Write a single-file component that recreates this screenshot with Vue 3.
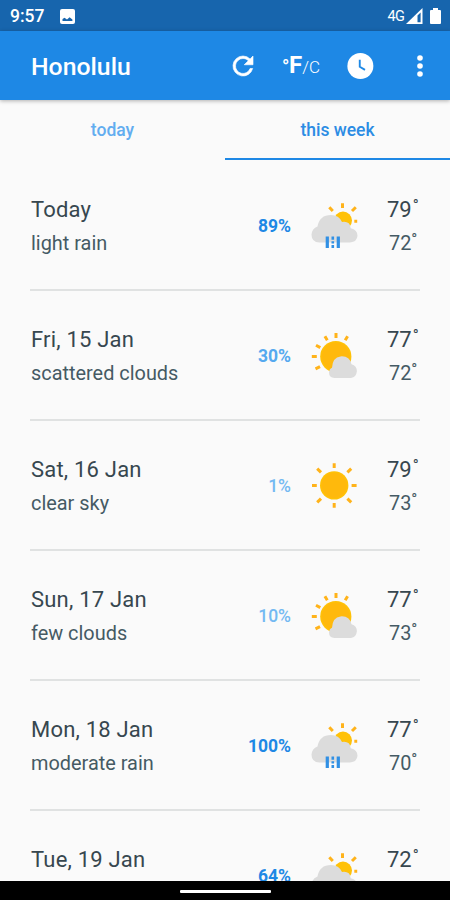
<template>
  <div class="screen">
    <header class="status-bar">
      <span class="time">9:57</span>
      <svg class="picture" width="15" height="15" viewBox="0 0 15 15">
        <rect width="15" height="15" rx="2" fill="#fff" />
        <path d="M2.5 12 V10 L4.5 8.8 L7 10.5 L9.6 8.3 L12.4 10.5 V12 Z" fill="#1765ad" />
      </svg>
      <span class="network">4G</span>
      <svg class="signal" width="17" height="16" viewBox="0 0 17 16">
        <path d="M0 16 L16.5 0 V16 Z" fill="#fff" />
        <path d="M11.5 7.5 L14.6 4.4 V14.2 H11.5 Z" fill="#1765ad" />
      </svg>
      <svg class="battery" width="11" height="16" viewBox="0 0 11 16">
        <path d="M3 0 H8 V2 H10 Q11 2 11 3 V15 Q11 16 10 16 H1 Q0 16 0 15 V3 Q0 2 1 2 H3 Z" fill="#fff" />
      </svg>
    </header>

    <div class="toolbar">
      <h1>Honolulu</h1>
      <svg class="refresh" width="30" height="30" viewBox="0 0 24 24">
        <path d="M17.65 6.35A7.96 7.96 0 0 0 12 4a8 8 0 1 0 7.73 10h-2.08A6 6 0 1 1 12 6c1.66 0 3.14.69 4.22 1.78L13 11h7V4z" fill="#fff" stroke="#fff" stroke-width=".5" />
      </svg>
      <div class="units"><span class="deg">°</span><b>F</b><span class="alt">/C</span></div>
      <svg class="clock" width="30" height="30" viewBox="0 0 24 24">
        <circle cx="12.3" cy="12" r="10.4" fill="#fff" />
        <path d="M11.8 7 V12.6 L16 15.1" fill="none" stroke="#1e88e5" stroke-width="1.5" />
      </svg>
      <svg class="more" width="6" height="22" viewBox="0 0 6 22">
        <circle v-for="y in [3, 11, 19]" :key="y" cx="3" :cy="y" r="2.8" fill="#fff" />
      </svg>
    </div>

    <nav class="tabs">
      <div class="tab">today</div>
      <div class="tab active">this week</div>
    </nav>

    <main class="list">
      <div v-for="day in days" :key="day.date" class="row">
        <div class="info">
          <div class="date">{{ day.date }}</div>
          <div class="desc">{{ day.desc }}</div>
        </div>
        <div class="chance" :class="day.level">{{ day.chance }}%</div>

        <svg v-if="day.icon === 'rain'" class="icon" width="50" height="50" viewBox="0 0 50 50">
          <circle cx="33" cy="20.5" r="9" fill="#ffc107" />
          <path class="ray" d="M32.5 3.2V8 M19.3 7.3L22.8 11 M45.8 7.3L42 11 M44.3 21.3H47.2" />
          <path d="M9.5 42.5 Q1.5 42 1.5 34.7 Q2 28.5 7.5 26.5 Q9.5 15 21 15 Q29 15.2 32 22 Q40 20.8 40.8 28.3 Q47.5 30 47.5 35.8 Q47 42 40 42.5 Z" fill="#dcdcdc" />
          <path class="drops" d="M17.3 36.5V48 M28.3 36.5V48" />
          <path class="drops thin" d="M22.8 36.5V39.8 M22.8 41.3V43.5 M22.8 45V48" />
        </svg>

        <svg v-else-if="day.icon === 'cloudy'" class="icon" width="50" height="50" viewBox="0 0 50 50">
          <circle cx="25.8" cy="26.6" r="15.6" fill="#ffc107" />
          <circle cx="25.8" cy="26.6" r="14" fill="#ffb90c" />
          <path class="ray" d="M26 3V8 M14.9 6.3L17.3 10.3 M37.6 6.3L35.2 10.3 M6 15.2L10.3 17.6 M1.8 26.6H6.8 M5.5 38.8L10 36.6" />
          <path d="M24.5 48 Q19 47.5 19 42.8 Q19.2 38.6 22 37.7 Q22.6 27.2 30.5 26.4 Q39.5 25.6 41.5 34.3 Q46.9 36 46.9 41.3 Q46.2 47.5 41 48 Z" fill="#dcdcdc" />
        </svg>

        <svg v-else class="icon" width="50" height="50" viewBox="0 0 50 50">
          <circle cx="24.2" cy="25.4" r="14.2" fill="#ffc107" />
          <circle cx="24.2" cy="25.4" r="12.6" fill="#ffb90c" />
          <path class="ray" d="M24.2 3.2V8 M24.2 43V47.8 M2 25.4H6.8 M41.6 25.4H46.6 M7.2 8.6L11 12.4 M41.2 8.6L37.4 12.4 M7.2 42.4L11 38.6 M41.2 42.4L37.4 38.6" />
        </svg>

        <div class="temps">
          <div class="high">{{ day.high }}<span>°</span></div>
          <div class="low"><template v-if="day.low">{{ day.low }}<span>°</span></template></div>
        </div>
      </div>
    </main>

    <footer class="nav-bar"><div class="handle"></div></footer>
  </div>
</template>

<script setup>
import { ref } from 'vue';

const days = ref([
  { date: 'Today', desc: 'light rain', chance: 89, level: 'strong', icon: 'rain', high: 79, low: 72 },
  { date: 'Fri, 15 Jan', desc: 'scattered clouds', chance: 30, level: 'medium', icon: 'cloudy', high: 77, low: 72 },
  { date: 'Sat, 16 Jan', desc: 'clear sky', chance: 1, level: 'weak', icon: 'clear', high: 79, low: 73 },
  { date: 'Sun, 17 Jan', desc: 'few clouds', chance: 10, level: 'weak', icon: 'cloudy', high: 77, low: 73 },
  { date: 'Mon, 18 Jan', desc: 'moderate rain', chance: 100, level: 'strong', icon: 'rain', high: 77, low: 70 },
  { date: 'Tue, 19 Jan', desc: '', chance: 64, level: 'strong', icon: 'rain', high: 72, low: null },
]);
</script>

<style>
body {
  margin: 0;
  background-color: #fafafa;
}
</style>

<style scoped>
.screen {
  display: flex;
  flex-direction: column;
  width: 450px;
  height: 900px;
  overflow: hidden;
  background-color: #fafafa;
  font-family: Roboto, "Liberation Sans", sans-serif;
}

.status-bar {
  display: flex;
  align-items: center;
  flex: none;
  height: 31px;
  box-sizing: border-box;
  padding: 1px 9px 0 10px;
  background-color: #1765ad;
  color: #fff;
}

.time {
  width: 50px;
  font-size: 17.5px;
  font-weight: 500;
}

.network {
  margin-left: auto;
  font-size: 14.5px;
  letter-spacing: -0.8px;
}

.signal {
  margin-left: 2px;
  margin-right: 7px;
}

.toolbar {
  display: flex;
  align-items: center;
  flex: none;
  height: 69px;
  box-sizing: border-box;
  padding: 0 27px 0 31px;
  background-color: #1e88e5;
  color: #fff;
  box-shadow: 0 1px 4px rgba(0, 0, 0, 0.3);
}

h1 {
  margin: 1px 0 0;
  width: 197px;
  font-size: 24.8px;
  font-weight: 500;
}

.units {
  display: flex;
  align-items: baseline;
  width: 62px;
  margin-left: 25px;
  line-height: 30px;
}

.units b {
  font-size: 24px;
}

.deg {
  font-size: 19px;
  font-weight: 700;
  width: 6px;
  margin-left: -1px;
  margin-right: 1px;
}

.alt {
  font-size: 17px;
  font-weight: 300;
}

.more {
  margin-left: auto;
}

.tabs {
  display: flex;
  flex: none;
  height: 61px;
}

.tab {
  flex: 1;
  box-sizing: border-box;
  height: 60px;
  line-height: 60px;
  border-bottom: 2.5px solid transparent;
  text-align: center;
  font-size: 17.5px;
  font-weight: 500;
  color: #62adf0;
}

.tab.active {
  color: #2c8ce4;
  border-bottom-color: #1e88e5;
}

.list {
  flex: 1;
  min-height: 0;
  overflow: hidden;
  padding: 0 30px;
}

.row {
  display: flex;
  align-items: center;
  box-sizing: border-box;
  height: 130px;
  border-bottom: 2px solid #e0e2e2;
  color: #455a64;
}

.info {
  width: 180px;
  padding-top: 3px;
  padding-left: 1px;
}

.date,
.high {
  height: 34px;
  line-height: 34px;
  font-size: 22px;
  color: #37474f;
}

.date {
  letter-spacing: 0.2px;
}

.desc,
.low {
  height: 34px;
  line-height: 34px;
  font-size: 19.9px;
  white-space: nowrap;
}

.chance {
  width: 80px;
  padding-top: 2px;
  text-align: right;
  font-size: 17.5px;
  font-weight: 700;
}

.strong {
  color: #1e88e5;
}

.medium {
  color: #55a9ef;
}

.weak {
  color: #74b9f2;
  font-weight: 500;
}

.icon {
  flex: none;
  margin-left: 19px;
}

.ray {
  fill: none;
  stroke: #ffb31a;
  stroke-width: 3;
}

.drops {
  fill: none;
  stroke: #3190e4;
  stroke-width: 3.2;
}

.thin {
  stroke-width: 2.6;
}

.temps {
  width: 33px;
  margin-left: auto;
  padding-top: 3px;
  white-space: nowrap;
}

.low {
  padding-left: 2px;
}

.high span,
.low span {
  font-size: 16px;
  vertical-align: 5px;
  line-height: 1;
}

.high span {
  margin-left: 1px;
  vertical-align: 6px;
}

.nav-bar {
  display: flex;
  justify-content: center;
  align-items: center;
  flex: none;
  height: 19px;
  background-color: #000;
}

.handle {
  width: 91px;
  height: 3px;
  margin-top: 2px;
  border-radius: 1px;
  background-color: #fff;
}
</style>
